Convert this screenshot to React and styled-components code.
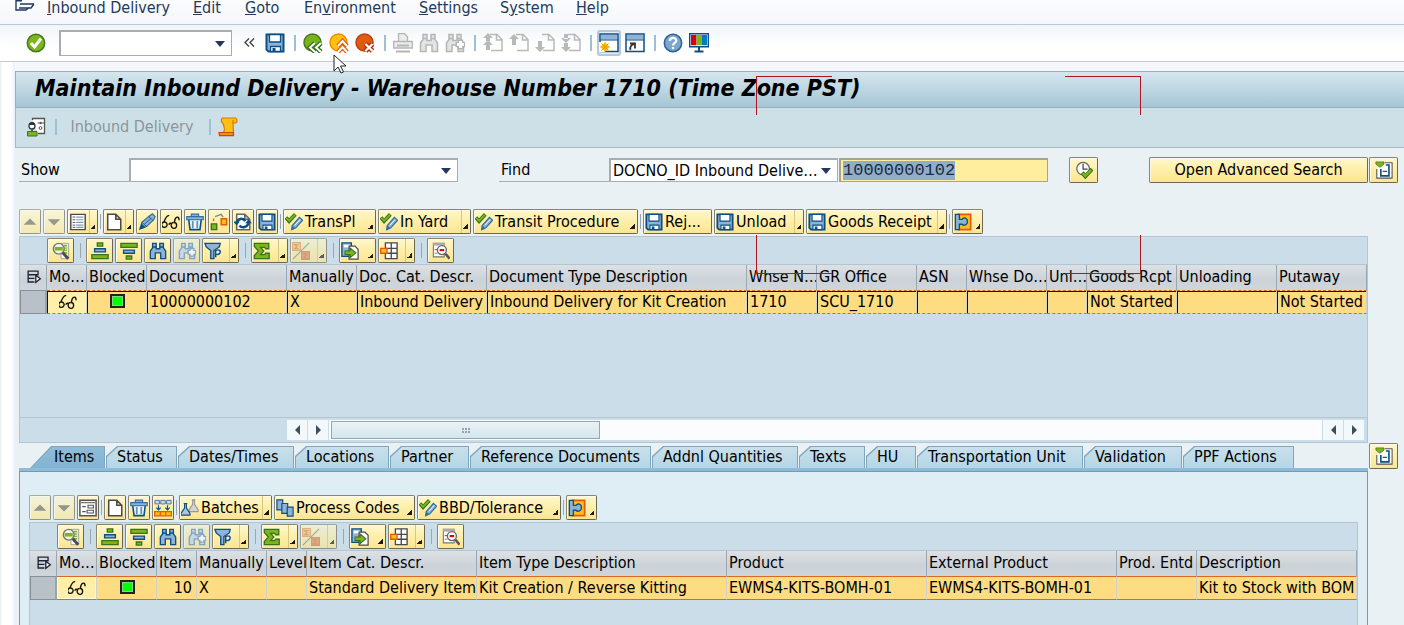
import React, { useEffect, useRef } from "react";
import styled, { createGlobalStyle, css } from "styled-components";

const Global = createGlobalStyle`
  * { box-sizing: border-box; }
  html, body { margin: 0; height: 100%; }
  #root { height: 100%; }
  body {
    font: 16px/20px "DejaVu Sans Condensed", "DejaVu Sans", sans-serif;
    color: #000;
    background: #fff;
    overflow: hidden;
  }
  button, input, select { font: inherit; color: inherit; margin: 0; }
  svg { display: block; flex: none; }
`;

/* ---------- icons ---------- */

const B = "#0b4f86";
const L = "#8fb3d4";
const G = "#7fb51c";
const D = "#37741f";
const O = "#e8590c";
const Y = "#fdc013";
const K = "#4a4a4a";

const binoculars = (s, f) => (
  <g fill={f} stroke={s} strokeWidth="1.500">
    <path d="M1.500 18.500V10L4 6.500V1.500h4v6h4v-6h4v5l2.500 3.500v8.500h-5.500V12h-6v6.500z" />
    <path d="M4 5.500h4M12 5.500h4" />
  </g>
);
const plus = (s) => (
  <g>
    <path d="M15.500 6.500v10M10.500 11.500h10" stroke={s} strokeWidth="5.500" />
    <path d="M15.500 8v7M12 11.500h7" stroke="#fff" strokeWidth="3" />
  </g>
);
const disk = (
  <g>
    <path d="M1.500 1.500h17v17h-15l-2-2z" fill={L} stroke={B} strokeWidth="2" />
    <path d="M4.500 1.500h11v7.500h-11z" fill="#fff" stroke={B} strokeWidth="1.300" />
    <path d="M5.500 13.500h10v5h-10z" fill="#fff" stroke={B} strokeWidth="1.300" />
    <path d="M7.500 15h3v3.500h-3z" fill={B} />
  </g>
);
const page = (s = K) => (
  <path d="M3 1.500h9l5.500 5.500v11.500H3z M12 1.500V7h5.500" fill="#fff" stroke={s} strokeWidth="1.700" />
);
const greyPage = <path d="M7 1.500h7l5 5v11H8 M13.500 2v5h5" fill="none" stroke="#b9b9b9" strokeWidth="1.500" />;
const flask = (x, y, s, f) => (
  <path d={`M${x + 3} ${y}h4 M${x + 4} ${y}v5l-4 6v2h10v-2l-4-6v-5`} fill={f} stroke={s} strokeWidth="1.300" />
);

const shapes = {
  exit: <path d="M7 .7H1V10h10l3-2.500 M5 4h14M19 4l-3 4H4" fill="none" stroke="#223a5e" strokeWidth="1.400" />,
  check: (
    <g>
      <circle cx="10" cy="10" r="8.700" fill={G} stroke="#437a1e" strokeWidth="1.500" />
      <path d="M5 10l3.500 4L15 5.500" fill="none" stroke="#fff" strokeWidth="3" />
    </g>
  ),
  chevrons: <path d="M10 5.500L6 9.500l4 4 M15 5.500l-4 4 4 4" fill="none" stroke="#444" strokeWidth="1.400" />,
  disk,
  back: (
    <g>
      <circle cx="9.500" cy="9.500" r="8.500" fill="#77b41c" stroke="#48751c" strokeWidth="1.500" />
      <path d="M12 10l-5 4.500 5 4.500M18 10l-5 4.500 5 4.500" fill="none" stroke={D} strokeWidth="4.500" />
      <path d="M12 10l-5 4.500 5 4.500M18 10l-5 4.500 5 4.500" fill="none" stroke="#fff" strokeWidth="2" />
    </g>
  ),
  up: (
    <g>
      <circle cx="9.500" cy="9.500" r="8.500" fill="#ffc20e" stroke="#f18a00" strokeWidth="1.500" />
      <path d="M9 13l4.500-5L18 13M9 19l4.500-5L18 19" fill="none" stroke={O} strokeWidth="4.500" />
      <path d="M9 13l4.500-5L18 13M9 19l4.500-5L18 19" fill="none" stroke="#fff" strokeWidth="2" />
    </g>
  ),
  cancel: (
    <g>
      <circle cx="9.500" cy="9.500" r="8.500" fill="#e05a10" stroke="#c23c0a" strokeWidth="1.500" />
      <path d="M10.500 11l7 7M17.500 11l-7 7" stroke="#b02e08" strokeWidth="5" />
      <path d="M10.500 11l7 7M17.500 11l-7 7" stroke="#fff" strokeWidth="2.200" />
    </g>
  ),
  printer: (
    <g fill="#ececec" stroke="#b5b5b5" strokeWidth="1.300">
      <path d="M5.500 8V.7h6l3 3V8" /><path d="M.7 8.500h18.600v6.500H.7z" /><path d="M4 12.500h12M3 18.500h14" strokeWidth="2" />
    </g>
  ),
  findGrey: binoculars("#b5b5b5", "#e4e4e4"),
  findNextGrey: <g>{binoculars("#b5b5b5", "#e4e4e4")}{plus("#b5b5b5")}</g>,
  first: <g>{greyPage}<path d="M5 0l5 5H0zM5 7l5 5H0zM3 5h4v3H3zM3 11h4v6H3z" fill="#b9b9b9" /></g>,
  prev: <g>{greyPage}<path d="M5 1l5 5H0zM3 6h4v6H3z" fill="#b9b9b9" /></g>,
  next: <g>{greyPage}<path d="M5 19l5-5H0zM3 8h4v6H3z" fill="#b9b9b9" /></g>,
  last: <g>{greyPage}<path d="M5 19l5-5H0zM5 10l5-5H0zM3 10h4v4H3zM3 1h4v5H3z" fill="#b9b9b9" /></g>,
  session: (
    <g>
      <path d="M1 1h18v17.500H1z" fill="#fff" stroke={B} strokeWidth="1.500" /><path d="M2 2h16v4.500H2z" fill={L} />
      <path d="M1 7h18" stroke={B} /><path d="M0 9h6v10H0z" fill="#fff" /><circle cx="6" cy="14" r="3.600" fill={Y} />
      <path d="M6 9v10M1 14h10M2.500 10.500l7 7M9.500 10.500l-7 7" stroke="#f59c00" />
    </g>
  ),
  shortcut: (
    <g>
      <path d="M1 1h18v17.500H1z" fill="#fff" stroke={B} strokeWidth="1.500" /><path d="M2 2h16v4.500H2z" fill={L} />
      <path d="M1 7h18" stroke={B} /><path d="M5.500 17c-1-3 .5-5 4-6M5 10.500h5v5" fill="none" stroke="#333" strokeWidth="1.800" />
    </g>
  ),
  help: (
    <g>
      <circle cx="10" cy="10" r="8.700" fill="#7ba6cf" stroke="#2a6496" strokeWidth="1.500" />
      <path d="M6.800 8c0-4 6.500-4 6.500-.5 0 2.500-3.300 2.300-3.300 5M10 14v2" fill="none" stroke="#fff" strokeWidth="2.200" />
    </g>
  ),
  monitor: (
    <g>
      <path d="M.7.7h18.600v13H.7z" fill="#fff" stroke={B} strokeWidth="1.400" />
      <path d="M2 2h5.500v10.200H2z" fill="#d4001a" /><path d="M7.500 2h5v10.200h-5z" fill={G} /><path d="M12.500 2H18v10.200h-5.500z" fill="#007ac1" />
      <path d="M10 14v4M5.500 18.500h9" stroke={B} strokeWidth="2" />
    </g>
  ),
  person: (
    <g>
      <path d="M6.500 3V1.500h12v15H12" fill="#fff" stroke="#555" strokeWidth="1.300" />
      <path d="M11.500 6h2M15 6h3" stroke="#555" /><circle cx="14.500" cy="6" r="1.200" fill="#555" /><circle cx="14.500" cy="11" r="1.400" fill="#fff" stroke="#555" />
      <circle cx="6" cy="9" r="3" fill="#fff" stroke="#333" strokeWidth="1.300" /><path d="M3 8c0-4 6-4 6 0z" fill="#333" />
      <path d="M6 12v3" stroke="#555" strokeWidth="2" />
      <path d="M1.500 14.500h9.500v4.500H1.500z" fill={G} stroke={D} />
    </g>
  ),
  scroll: (
    <g fill={Y} stroke="#d97a00" strokeWidth="1.200">
      <path d="M4.500 1h13c2.500 1.500 1.500 5 0 5H15l.5 9.500H5c3-2 1-6 0-9-2-1-2.500-4-.5-5.500z" /><path d="M15 6V3" /><path d="M1 15.500h14.500v3.200H1.500z" fill="#f58a1f" stroke="#c84a00" />
    </g>
  ),
  clockCheck: (
    <g>
      <circle cx="9" cy="8.500" r="7" fill="#fff" stroke="#666" strokeWidth="1.400" /><path d="M9 3v6h5" fill="none" stroke="#444" strokeWidth="1.400" />
      <path d="M8 13l3.500 4L19 9" fill="none" stroke={D} strokeWidth="4.500" /><path d="M8.500 13.500l3 3L18 10" fill="none" stroke={G} strokeWidth="2.500" />
    </g>
  ),
  collapse: (
    <g>
      <path d="M11 2h8v17H2V9" fill="#fff" stroke="#555" strokeWidth="1.200" /><path d="M6.500 9v7.500h9v-12H12" fill="#fff" stroke={B} strokeWidth="1.800" />
      <path d="M8.500 11.500h5" stroke={B} strokeWidth="1.300" /><path d="M1 1h9v2.500L5.500 7 1 3.500z" fill={G} stroke={D} strokeWidth=".8" />
    </g>
  ),
  triUp: <path d="M3 13l7-7 7 7z" fill="#6d6858" />,
  triDown: <path d="M3 7h14l-7 7z" fill="#6d6858" />,
  list: (
    <g>
      <path d="M2 1.500h16v17H2z" fill="#fff" stroke={K} strokeWidth="1.600" /><path d="M4 4.500h3M4 7.500h3M4 10.500h3M4 13.500h3M4 16h3" stroke={K} />
      <path d="M8 4.500h8M8 7.500h8M8 10.500h8M8 13.500h8M8 16h8" stroke="#7d9cba" strokeWidth="1.300" />
    </g>
  ),
  page: page(),
  pencil: (
    <g>
      <path d="M4 10.500L13 3l3-2 3 3-1.500 3.500L9.500 15l-5 1.500z" fill={L} stroke="#33709f" strokeWidth="1.400" />
      <path d="M5 11l4.500 4M12 4l4.500 4M7 12.500l7-6" stroke={B} fill="none" /><path d="M1 19l2.500-7.500 5 4.500z" fill={B} />
    </g>
  ),
  glasses: (
    <path d="M8 3C5 2 4 6 2 10M14 8c2-5 5-4 5 0M2.500 10a3 3 0 1 0 3 4 3 3 0 0 0-3-4M7.500 13c1-2 2-2 3-.5M12.500 10.500a2.700 3.200 0 1 0 1 6.500 2.700 3.200 0 0 0 0-6.500l1-3" fill="none" stroke="#111" strokeWidth="1.500" />
  ),
  trash: (
    <g>
      <path d="M3 7h14l-1.500 11.500h-11z" fill="#f2f8fc" stroke={B} strokeWidth="1.800" /><path d="M.8 4h18.400v3.500H.8zM6 4V1.200h8V4" fill={L} stroke="#33709f" strokeWidth="1.300" />
      <path d="M7.500 9v8M12.500 9v8" stroke="#5d93bd" strokeWidth="2" />
    </g>
  ),
  route: (
    <g>
      <path d="M1.500 12h6v6.500h-6z" fill={G} stroke={D} strokeWidth="1.500" /><path d="M12.500 6.500h6v6.500h-6z" fill={Y} stroke={O} strokeWidth="1.700" />
      <path d="M4 9V6M5.500 4l7-2.500 2 3" fill="none" stroke="#888" strokeWidth="1.600" />
    </g>
  ),
  refresh: (
    <g>
      {page("#666")}
      <path d="M3 11C4 6 10 5 12.500 9" fill="none" stroke={B} strokeWidth="2.800" /><path d="M16 11c-1 5-7 6-10 3" fill="none" stroke={B} strokeWidth="2.800" />
      <path d="M-1 9.500h7.500L3 14zM12.500 11.500H20L16 7z" fill={B} />
    </g>
  ),
  approve: (
    <g>
      <path d="M1 5l3.500 4L11.500 1.500" fill="none" stroke={D} strokeWidth="4.200" /><path d="M1.500 5.500l3 3L11 2" fill="none" stroke={G} strokeWidth="2" />
      <path d="M8 14l8-9 3.500 3-7.500 8.500-4.500 2z" fill={L} stroke="#33709f" strokeWidth="1.400" /><path d="M11 13.500l6-6.500" stroke="#fff" /><path d="M7 19l1-5 3.500 3z" fill="#33709f" />
    </g>
  ),
  puzzle: (
    <g>
      <path d="M5 1.500h13.500v17H5z" fill={Y} stroke={O} strokeWidth="1.900" />
      <path d="M1.500 1.500H6V7h3c2-3 6-1 6 2.500S11 15 9 12.500H6v6H1.500z" fill={L} stroke={B} strokeWidth="1.500" />
    </g>
  ),
  detail: (
    <g>
      <path d="M10 1.500h8.500v17H10z" fill="#fff" stroke="#999" /><path d="M13 3h4v10h-4z" fill={G} /><path d="M13 5.500h4M13 8h4M13 10.500h4" stroke="#fff" />
      <circle cx="7.500" cy="7.500" r="6" fill="#f4f4ee" stroke="#777" strokeWidth="1.600" /><path d="M3 5.500h9v4H3z" fill={G} /><path d="M12 12l6 6.500" stroke={K} strokeWidth="3.200" />
    </g>
  ),
  sortAsc: (
    <g strokeWidth="1.500">
      <path d="M7 1h6v3.500H7z" fill={G} stroke={D} /><path d="M4 7.500h12V11H4z" fill={L} stroke={B} /><path d="M1 14h18v4.500H1z" fill={G} stroke={D} />
    </g>
  ),
  sortDesc: (
    <g strokeWidth="1.500">
      <path d="M1 1.500h18V6H1z" fill={G} stroke={D} /><path d="M4 9h12v3.500H4z" fill={L} stroke={B} /><path d="M7 15.500h6V19H7z" fill={G} stroke={D} />
    </g>
  ),
  find: binoculars(B, L),
  findNext: <g>{binoculars("#5d87ab", "#c4d6e4")}{plus("#5d87ab")}</g>,
  filter: (
    <g>
      <path d="M1 1.500h17l-1 4-6 4v9H7.500v-9l-5-4z" fill={L} stroke={B} strokeWidth="1.500" /><path d="M13 17V9.500c4-2 6 .5 4.500 3-1 1.500-3 1.500-4.500 1" fill="#e9f1f7" stroke={B} strokeWidth="1.600" />
    </g>
  ),
  sum: <path d="M1.500 1.500h16v6H14l-1-1.500H8.500L12 10l-3.500 4H13l1-1.500h4v6H1.500v-3.500L6 10 1.500 5z" fill={G} stroke={D} strokeWidth="1.500" />,
  subtotal: (
    <g opacity=".6">
      <path d="M.7.7h8.600v8.600H.7z" fill={Y} stroke={O} strokeWidth="1.300" /><path d="M10.700 10.700h8.600v8.600h-8.600z" fill={O} stroke="#b02e08" strokeWidth="1.300" />
      <path d="M7.500 3H3l2.500 2L3 7.500h4.500M17.500 13H13l2.500 2-2.500 2.500h4.500" stroke="#b02e08" fill="none" strokeWidth="1.200" /><path d="M1 19L19 1" stroke={K} strokeWidth="1.300" />
    </g>
  ),
  exportIcon: (
    <g>
      <path d="M1 1h10.500v15H1z" fill={L} stroke={B} strokeWidth="1.500" /><path d="M3 3h6.500v3H3z" fill="#fff" /><path d="M9 4.500h6.500L19 8v11H9z" fill="#fff" stroke={K} strokeWidth="1.400" />
      <path d="M4.500 10H10V6.500l6.500 5.500-6.500 5.500V14H4.500z" fill={G} stroke={D} strokeWidth="1.200" />
    </g>
  ),
  layout: (
    <g>
      <path d="M6 1h13v17.500H6zM6 7h13M6 12.500h13M12.500 1v17.500" fill="#fff" stroke={K} strokeWidth="1.500" /><path d="M.8 7h7v5.500h-7z" fill={Y} stroke={O} strokeWidth="1.500" />
    </g>
  ),
  inspect: (
    <g>
      <path d="M1.500 1.500h12v15h-12z" fill="#fff" stroke="#777" strokeWidth="1.200" /><path d="M1 1h13v3H1z" fill="#aaa" /><path d="M3 8.500h3" stroke="#e00" /><path d="M3 12.500h3" stroke="#777" />
      <circle cx="11" cy="9" r="5" fill="#fff" stroke="#666" strokeWidth="1.500" /><path d="M8.500 9h5" stroke="#e00" strokeWidth="2.400" /><path d="M15 13l4.500 5.500" stroke="#555" strokeWidth="2.800" />
    </g>
  ),
  form: (
    <g>
      <path d="M1 1.500h18v17H1z" fill="#fff" stroke="#555" strokeWidth="1.700" /><path d="M2 4h16" stroke="#777" strokeWidth="1.500" />
      <path d="M3.500 8.500h4M3.500 14h4M10 7h6v3h-6zM9 12.500h7v3H9z" stroke="#555" fill="none" strokeWidth="1.200" />
    </g>
  ),
  split: (
    <g>
      <path d="M1 1.500h5v4H1zM7.500 1.500h5v4h-5zM14 1.500h5v4h-5z" fill="#c9dceb" stroke="#406f99" />
      <path d="M5 7v5M2.500 9.500L5 12l2.500-2.500M15 7v5M12.500 9.500L15 12l2.500-2.500" stroke={B} fill="none" strokeWidth="1.300" />
      <path d="M.7 14h18.600v4.700H.7zM7 14v4.500M13 14v4.500" fill={Y} stroke={O} strokeWidth="1.400" />
    </g>
  ),
  batches: <g>{flask(9, 1, "#999", "#d5d5d5")}{flask(0, 5, B, "#a9c8e0")}</g>,
  codes: (
    <g fill={L} stroke={B} strokeWidth="1.300">
      <path d="M1 1h6.500v11H1z" /><path d="M6.500 5H13v11H6.500z" /><path d="M12.500 9H19v10h-6.500z" />
    </g>
  ),
  rowMenu: (
    <g fill="none" stroke="#1f2638" strokeWidth="1.500">
      <path d="M3.500 3.500h11v4h-11zM3.500 7.500v8h7M3.500 11.500h7" /><path d="M12 8l5 4-5 4z" fill="#fff" />
    </g>
  ),
};

const Icon = ({ name, size = 20 }) => (
  <svg width={size} height={size} viewBox="0 0 20 20" aria-hidden="true">{shapes[name]}</svg>
);

/* ---------- page frame ---------- */

const Page = styled.div`
  position: relative;
  height: 100%;
  min-width: 1300px;
  display: flex;
  flex-direction: column;
  overflow: hidden;
`;
const MenuBar = styled.nav`
  display: flex;
  gap: 24px;
  height: 25px;
  padding: 0 14px 0 15px;
  color: #23395b;
  background: linear-gradient(#fbfcfd, #f4f7fa);
  border-bottom: 1px solid #b9cbd6;
`;
const MenuLead = styled.span`
  margin-right: -12px;
`;
const MenuItem = styled.button`
  padding: 0;
  height: 15px;
  border: 0;
  background: none;
  line-height: 15px;
  width: ${(p) => p.$w}px;
  white-space: nowrap;
  text-align: left;
`;
const SystemBar = styled.div`
  display: flex;
  align-items: center;
  gap: 6px;
  height: 37px;
  padding-left: 26px;
  background: linear-gradient(#f1f5f9, #fff 60%);
  border-bottom: 1px solid #c6cbd3;
`;
const PlainButton = styled.button`
  display: grid;
  place-items: center;
  width: 20px;
  height: 22px;
  padding: 0;
  border: 0;
  background: none;
  ${(p) => p.$active && css`
    background: #e4eef6;
    box-shadow: 0 0 0 2px #b5c7d8;
    border-radius: 1px;
  `}
`;
const Divider = styled.span`
  width: 6px;
  height: 16px;
  background: linear-gradient(90deg, transparent 3px, #9dc0d2 3px, #9dc0d2 5px, transparent 5px);
`;
const Combo = styled.span`
  display: flex;
  align-items: center;
  width: ${(p) => p.$w}px;
  height: ${(p) => p.$h || 24}px;
  margin: ${(p) => p.$m || 0};
  padding-right: 6px;
  background: #fff;
  border: 2px solid #a9adb1;
  border-width: 2px 1px 1px 2px;
`;
const ComboInput = styled.input`
  flex: 1;
  min-width: 0;
  border: 0;
  outline: 0;
  background: none;
`;
const ComboSelect = styled.select`
  flex: 1;
  min-width: 0;
  padding: 0 2px;
  border: 0;
  outline: 0;
  appearance: none;
  background: none;
`;
const Caret = styled.span`
  border: 5px solid transparent;
  border-top: 6px solid #23395b;
  border-bottom: 0;
`;
const Main = styled.main`
  flex: 1;
  display: flex;
  flex-direction: column;
  min-height: 0;
  padding: 9px 0 0 15px;
  background: linear-gradient(90deg, #e6e9ec 0, #fff 2px, #fff 11px, #eceff5 15px, #f4f7fb 15px);
`;
const TitleBar = styled.header`
  height: 37px;
  padding: 0 19px;
  background: linear-gradient(#d6e6ee, #a5c6d5);
  border: 1px solid #98aebb;
  border-right: 0;
`;
const Title = styled.h1`
  margin: 0;
  font-size: 23px;
  line-height: 32px;
  font-weight: bold;
  font-style: italic;
  white-space: nowrap;
`;
const AppBar = styled.div`
  display: flex;
  align-items: center;
  gap: 6px;
  height: 40px;
  padding: 0 0 2px 10px;
  color: #8a969c;
  background: #cee0e7;
  border: 1px solid #a6b9c9;
  border-width: 0 0 1px 1px;
`;
const TextButton = styled.button`
  border: 0;
  padding: 0;
  margin: 0 6px;
  width: 124px;
  background: none;
  white-space: nowrap;
`;
const Body = styled.div`
  flex: 1;
  min-height: 0;
  display: flex;
  flex-direction: column;
  padding: 9px 6px 0 4px;
  background: #e9f1f5;
`;

/* ---------- search row ---------- */

const SearchRow = styled.div`
  display: flex;
  align-items: center;
  height: 26px;
`;
const FieldLabel = styled.label`
  height: 24px;
  width: ${(p) => p.$w}px;
  margin-left: ${(p) => p.$ml || 0}px;
  padding: 2px;
  border-bottom: 1px solid #a9b0b5;
`;
const DocInput = styled.input`
  width: 209px;
  height: 24px;
  margin: 0 21px 0 1px;
  padding: 0 2px;
  outline: 0;
  border: 2px solid #a9a58c;
  border-width: 2px 1px 1px 2px;
  background: #ffee9e;
  font: 17px/18px "Liberation Mono", monospace;
  &::selection { background: rgba(143, 172, 203, 0.99); color: #1d2b3c; }
`;
const SearchActions = styled.div`
  display: flex;
  gap: 1px;
  margin-left: auto;
`;

/* ---------- yellow buttons ---------- */

const KeyButton = styled.button`
  display: flex;
  align-items: center;
  gap: 2px;
  width: ${(p) => p.$w}px;
  height: ${(p) => p.$h}px;
  padding: 0 0 0 ${(p) => (p.$left ? 1 : 0)}px;
  justify-content: ${(p) => (p.$left ? "flex-start" : "center")};
  white-space: nowrap;
  background: linear-gradient(#fff7d0, #feefa8 50%, #fbe593);
  border: 1px solid #77725c;
  border-color: #8b8669 #6c6754 #6c6754 #8b8669;
  border-radius: 2px;
  box-shadow: inset 1px 1px 0 #fffbe6;
  opacity: ${(p) => (p.$dim ? 0.65 : 1)};
`;
const MenuMark = styled.span`
  display: flex;
  align-items: flex-end;
  justify-content: flex-end;
  align-self: stretch;
  width: 9px;
  margin-left: auto;
  padding: 0 2px 4px 0;
  border-left: 1px solid ${(p) => (p.$line ? "#d6c583" : "transparent")};
  &::after {
    content: "";
    width: 5px;
    height: 5px;
    background: linear-gradient(135deg, transparent 50%, #1d1b14 50%);
  }
`;
const Tools = styled.div`
  display: flex;
  align-items: center;
  gap: 2px;
  margin: ${(p) => p.$m || 0};
`;
const Sep = styled.span`
  width: ${(p) => p.$w}px;
  height: 15px;
  background: linear-gradient(#9aa7ad, #9aa7ad) center / 1px 100% no-repeat;
`;

const Key = ({ icon, label, w, h, menu, line, dim, name }) => (
  <KeyButton type="button" $w={w} $h={h} $dim={dim} $left={(icon && label) || menu} aria-label={name || label || icon}>
    {icon && <Icon name={icon} size={18} />}
    {label}
    {menu && <MenuMark $line={line} />}
  </KeyButton>
);

const renderTools = (items, h, sepW) =>
  items.map((t, i) => (t === "|" ? <Sep key={i} $w={sepW} /> : <Key key={i} h={h} {...t} />));

/* ---------- grids ---------- */

const GridPanel = styled.section`
  display: flex;
  flex-direction: column;
  margin: 2px ${(p) => p.$mr}px 0 0;
  ${(p) => (p.$h ? css`height: ${p.$h}px;` : css`flex: 1; min-height: 0;`)}
  background: #cadde8;
  border: 1px solid #b3c5d1;
  border-bottom-width: ${(p) => (p.$h ? 1 : 0)}px;
`;
const GridTools = styled.div`
  height: 28px;
  padding: 1px 0 0 27px;
  border-bottom: 1px solid #b3c5d1;
`;
const Table = styled.table`
  width: 100%;
  table-layout: fixed;
  border-collapse: separate;
  border-spacing: 0;
`;
const Head = styled.th`
  height: 25px;
  padding: 0 0 1px 2px;
  font-weight: normal;
  text-align: left;
  white-space: nowrap;
  overflow: hidden;
  background: linear-gradient(#dde1e4, #ccd2d8 60%, #ced6dc);
  border-right: 1px solid #98a9b5;
`;
const Cell = styled.td`
  height: 24px;
  padding: 0 1px 0 ${(p) => (p.$framed ? 3 : 2)}px;
  white-space: nowrap;
  overflow: hidden;
  background: #fddc82;
  text-align: ${(p) => p.$align || "left"};
  border: 1px ${(p) => (p.$framed ? "dashed" : "solid")} #d96b1e;
  border-width: 1px 0;
  border-right: 1px solid #cdd3cf;
  ${(p) => p.$framed && css`box-shadow: inset 1px 1px 0 #1a1408;`}
  ${(p) => p.$align === "right" && css`padding-right: 4px;`}
`;
const SelectorCell = styled.td`
  padding: 0;
  background: #b8c0c8;
  border: 1px solid #878f97;
  border-right: 2px solid #98a2aa;
`;
const ModeCell = styled(Cell)`
  background: #ffefa9;
  ${(p) => !p.$framed && css`box-shadow: inset 0 0 0 1px #fff8d8;`}
`;
const Centered = styled.span`
  display: flex;
  justify-content: center;
`;
const Lamp = styled.span`
  width: 15px;
  height: 14px;
  margin-bottom: 3px;
  background: #00ff00;
  border: 2px solid #222;
  box-shadow: inset 0 0 0 1px #7adf7a;
`;

const Grid = ({ columns, framed }) => (
  <Table>
    <colgroup>
      <col width="27" />
      {columns.map((c) => <col key={c.title} width={c.w} />)}
    </colgroup>
    <thead>
      <tr>
        <Head aria-label="Select rows"><Centered><Icon name="rowMenu" size={18} /></Centered></Head>
        {columns.map((c) => <Head key={c.title}>{c.title}</Head>)}
      </tr>
    </thead>
    <tbody>
      <tr>
        <SelectorCell />
        {columns.map((c) => {
          if (c.kind === "mode")
            return <ModeCell key={c.title} $framed={framed}><Centered><Icon name="glasses" size={18} /></Centered></ModeCell>;
          return (
            <Cell key={c.title} $framed={framed} $align={c.align}>
              {c.kind === "lamp" ? <Centered><Lamp /></Centered> : c.value}
            </Cell>
          );
        })}
      </tr>
    </tbody>
  </Table>
);

const ScrollRow = styled.div`
  display: flex;
  height: 25px;
  margin-top: auto;
  padding: 2px 2px 2px 267px;
  border-top: 1px solid #b3c5d1;
`;
const ScrollArrow = styled.button`
  display: grid;
  place-items: center;
  width: 21px;
  padding: 0;
  border: 0;
  border-right: 1px solid #cadde8;
  background: #f3f8fb;
  &::before {
    content: "";
    border: 5px solid transparent;
    ${(p) => (p.$dir === "left"
      ? css`border-right-color: #38505b; border-left: 0;`
      : css`border-left-color: #38505b; border-right: 0;`)}
  }
`;
const Track = styled.div`
  flex: 1;
  padding: 1px 2px;
  background: #fbfcfd;
  border-right: 1px solid #cadde8;
`;
const Thumb = styled.div`
  display: grid;
  place-items: center;
  width: 269px;
  height: 18px;
  background: linear-gradient(#e9f2f6, #d6e6ee);
  border: 1px solid #94a7b1;
  &::before {
    content: "";
    width: 8px;
    height: 5px;
    background:
      linear-gradient(transparent 2px, #dfebf1 2px, #dfebf1 3px, transparent 3px),
      repeating-linear-gradient(90deg, #93a8b5 0 2px, transparent 2px 3px);
  }
`;

/* ---------- tabs ---------- */

const TabRow = styled.div`
  display: flex;
  align-items: flex-start;
  justify-content: space-between;
  height: 28px;
`;
const TabList = styled.div`
  flex: 1;
  display: flex;
  align-items: flex-end;
  height: 28px;
  margin-right: 1px;
  padding-left: 11px;
  border-bottom: 3px solid #8cbcd8;
  border-top-right-radius: 2px;
`;
const Tab = styled.button`
  position: relative;
  isolation: isolate;
  width: ${(p) => p.$w}px;
  height: 22px;
  margin-right: 1px;
  padding: 0 0 0 ${(p) => (p.$active ? 24 : 11)}px;
  border: 0;
  line-height: 22px;
  text-align: left;
  white-space: nowrap;
  background: #7fa6bd;
  &, &::before {
    clip-path: ${(p) => (p.$active
      ? "polygon(0 100%, 21px 0, 100% 0, 100% 100%)"
      : "polygon(0 10px, 11px 0, 100% 0, 100% 100%, 0 100%)")};
  }
  &::before {
    content: "";
    position: absolute;
    inset: 1px 1px 0 1px;
    z-index: -1;
    background: ${(p) => (p.$active ? "linear-gradient(#8fbdd9, #82b3d2)" : "linear-gradient(#c8e0eb, #b5d6e5)")};
  }
`;
const TabPanel = styled.section`
  flex: 1;
  min-height: 0;
  display: flex;
  flex-direction: column;
  margin-right: 30px;
  padding: 23px 9px 0 9px;
  background: #dfedf4;
  border: solid #6f9cba;
  border-width: 1px 1px 0 1px;
`;

/* ---------- overlays ---------- */

const CaptureFrame = styled.div`
  position: absolute;
  left: 756px;
  top: 76px;
  width: 385px;
  height: 198px;
  pointer-events: none;
`;
const Corner = styled.span`
  position: absolute;
  width: 76px;
  height: 39px;
  border: 0 solid #b0171c;
  ${(p) => css`
    ${p.$v}: 0;
    ${p.$s}: 0;
    border-${p.$v}-width: 1px;
    border-${p.$s}-width: 1px;
  `}
`;
const Pointer = styled.svg`
  position: absolute;
  left: 333px;
  top: 54px;
`;

/* ---------- data ---------- */

const menus = [
  ["I", "nbound Delivery", 122], ["E", "dit", 28], ["G", "oto", 35], ["En|v", "ironment", 91],
  ["S", "ettings", 57], ["S|y", "stem", 52], ["H", "elp", 40],
];

const systemKeys = [
  "chevrons", "disk", "|", "back", "up", "cancel", "|", "printer", "findGrey", "findNextGrey", "|",
  "first", "prev", "next", "last", "|", "session", "shortcut", "|", "help", "monitor",
];

const deliveryTools = [
  { icon: "triUp", w: 22, dim: true, name: "Collapse" }, { icon: "triDown", w: 22, dim: true, name: "Expand" },
  { icon: "list", w: 31, menu: true, line: true }, "|",
  { icon: "page", w: 31, menu: true, line: true }, { icon: "pencil", w: 22 }, { icon: "glasses", w: 22 },
  { icon: "trash", w: 22 }, { icon: "route", w: 22 }, { icon: "refresh", w: 22 }, { icon: "disk", w: 22 }, "|",
  { icon: "approve", label: "TransPl", w: 93, menu: true },
  { icon: "approve", label: "In Yard", w: 93, menu: true, line: true },
  { icon: "approve", label: "Transit Procedure", w: 165, menu: true }, "|",
  { icon: "disk", label: "Rej...", w: 69 },
  { icon: "disk", label: "Unload", w: 90, menu: true, line: true },
  { icon: "disk", label: "Goods Receipt", w: 141, menu: true, line: true }, "|",
  { icon: "puzzle", w: 31, menu: true },
];

const itemTools = [
  { icon: "triUp", w: 22, dim: true, name: "Collapse" }, { icon: "triDown", w: 22, dim: true, name: "Expand" },
  { icon: "form", w: 22 }, "|",
  { icon: "page", w: 22 }, { icon: "trash", w: 22 }, { icon: "split", w: 22 }, "|",
  { icon: "batches", label: "Batches", w: 93, menu: true, line: true },
  { icon: "codes", label: "Process Codes", w: 141, menu: true },
  { icon: "approve", label: "BBD/Tolerance", w: 144, menu: true }, "|",
  { icon: "puzzle", w: 31, menu: true },
];

const gridTools = [
  { icon: "detail", w: 27 }, "|",
  { icon: "sortAsc", w: 27 }, { icon: "sortDesc", w: 27 }, { icon: "find", w: 27 },
  { icon: "findNext", w: 27, dim: true }, { icon: "filter", w: 37, menu: true, line: true }, "|",
  { icon: "sum", w: 37, menu: true, line: true }, { icon: "subtotal", w: 37, menu: true, line: true, dim: true }, "|",
  { icon: "exportIcon", w: 37, menu: true }, { icon: "layout", w: 37, menu: true, line: true }, "|",
  { icon: "inspect", w: 27 },
];

const deliveryColumns = [
  { title: "Mo…", w: 40, kind: "mode" }, { title: "Blocked", w: 60, kind: "lamp" },
  { title: "Document", w: 140, value: "10000000102" }, { title: "Manually", w: 70, value: "X" },
  { title: "Doc. Cat. Descr.", w: 130, value: "Inbound Delivery" },
  { title: "Document Type Description", w: 260, value: "Inbound Delivery for Kit Creation" },
  { title: "Whse N…", w: 70, value: "1710" }, { title: "GR Office", w: 100, value: "SCU_1710" },
  { title: "ASN", w: 50 }, { title: "Whse Do…", w: 80 }, { title: "Unl…", w: 40 },
  { title: "Goods Rcpt", w: 90, value: "Not Started" }, { title: "Unloading", w: 100 },
  { title: "Putaway", value: "Not Started" },
];

const itemColumns = [
  { title: "Mo…", w: 40, kind: "mode" }, { title: "Blocked", w: 60, kind: "lamp" },
  { title: "Item", w: 40, value: "10", align: "right" }, { title: "Manually", w: 70, value: "X" },
  { title: "Level", w: 40 }, { title: "Item Cat. Descr.", w: 170, value: "Standard Delivery Item" },
  { title: "Item Type Description", w: 250, value: "Kit Creation / Reverse Kitting" },
  { title: "Product", w: 200, value: "EWMS4-KITS-BOMH-01" },
  { title: "External Product", w: 190, value: "EWMS4-KITS-BOMH-01" },
  { title: "Prod. Entd", w: 80 }, { title: "Description", value: "Kit to Stock with BOM" },
];

const tabs = [
  ["Items", 75], ["Status", 71], ["Dates/Times", 116], ["Locations", 94], ["Partner", 79],
  ["Reference Documents", 181], ["Addnl Quantities", 146], ["Texts", 66], ["HU", 50],
  ["Transportation Unit", 166], ["Validation", 98], ["PPF Actions", 111],
];

export default function App() {
  const docRef = useRef(null);
  useEffect(() => {
    docRef.current.focus();
    docRef.current.select();
  }, []);

  return (
    <Page>
      <Global />
      <MenuBar>
        <MenuLead><Icon name="exit" /></MenuLead>
        {menus.map(([key, rest, w]) => {
          const [pre, k] = key.includes("|") ? key.split("|") : ["", key];
          return <MenuItem key={rest} type="button" $w={w}>{pre}<u>{k}</u>{rest}</MenuItem>;
        })}
      </MenuBar>
      <SystemBar>
        <PlainButton type="button" aria-label="Enter"><Icon name="check" /></PlainButton>
        <Combo $w={173} $h={26} $m="0 1px 0 7px">
          <ComboInput aria-label="Command" /><Caret />
        </Combo>
        {systemKeys.map((k, i) => k === "|" ? <Divider key={i} /> : (
          <PlainButton key={i} type="button" aria-label={k} $active={k === "session"}><Icon name={k} /></PlainButton>
        ))}
      </SystemBar>

      <Main>
        <TitleBar><Title>Maintain Inbound Delivery - Warehouse Number 1710 (Time Zone PST)</Title></TitleBar>
        <AppBar>
          <PlainButton type="button" aria-label="Partner"><Icon name="person" /></PlainButton>
          <Divider />
          <TextButton type="button">Inbound Delivery</TextButton>
          <Divider />
          <PlainButton type="button" aria-label="Log"><Icon name="scroll" /></PlainButton>
        </AppBar>

        <Body>
          <SearchRow>
            <FieldLabel htmlFor="show" $w={110}>Show</FieldLabel>
            <Combo $w={329}><ComboInput id="show" /><Caret /></Combo>
            <FieldLabel htmlFor="find" $w={110} $ml={41}>Find</FieldLabel>
            <Combo $w={229}>
              <ComboSelect id="find"><option>DOCNO_ID Inbound Delive…</option></ComboSelect><Caret />
            </Combo>
            <DocInput ref={docRef} aria-label="Document number" defaultValue="10000000102" />
            <Key icon="clockCheck" w={29} h={26} name="Execute search" />
            <SearchActions>
              <Key label="Open Advanced Search" w={219} h={26} />
              <Key icon="collapse" w={29} h={26} name="Collapse list" />
            </SearchActions>
          </SearchRow>

          <Tools $m="26px 0 0">{renderTools(deliveryTools, 25, 1)}</Tools>

          <GridPanel $h={207} $mr={30}>
            <GridTools><Tools>{renderTools(gridTools, 25, 8)}</Tools></GridTools>
            <Grid columns={deliveryColumns} framed />
            <ScrollRow>
              <ScrollArrow type="button" $dir="left" aria-label="Scroll left" />
              <ScrollArrow type="button" $dir="right" aria-label="Scroll right" />
              <Track><Thumb /></Track>
              <ScrollArrow type="button" $dir="left" aria-label="Scroll left" />
              <ScrollArrow type="button" $dir="right" aria-label="Scroll right" />
            </ScrollRow>
          </GridPanel>

          <TabRow>
            <TabList role="tablist">
              {tabs.map(([t, w], i) => (
                <Tab key={t} type="button" role="tab" aria-selected={i === 0} $active={i === 0} $w={w}>{t}</Tab>
              ))}
            </TabList>
            <Key icon="collapse" w={29} h={26} name="Collapse details" />
          </TabRow>

          <TabPanel>
            <Tools>{renderTools(itemTools, 25, 1)}</Tools>
            <GridPanel $mr={0}>
              <GridTools><Tools>{renderTools(gridTools, 25, 8)}</Tools></GridTools>
              <Grid columns={itemColumns} />
            </GridPanel>
          </TabPanel>
        </Body>
      </Main>

      <CaptureFrame>
        <Corner $v="top" $s="left" /><Corner $v="top" $s="right" />
        <Corner $v="bottom" $s="left" /><Corner $v="bottom" $s="right" />
      </CaptureFrame>
      <Pointer width="14" height="22" viewBox="0 0 14 22" aria-hidden="true">
        <path d="M1 1v16l4-4 3 6 2.500-1-3-6H13z" fill="#fff" stroke="#222" />
      </Pointer>
    </Page>
  );
}
